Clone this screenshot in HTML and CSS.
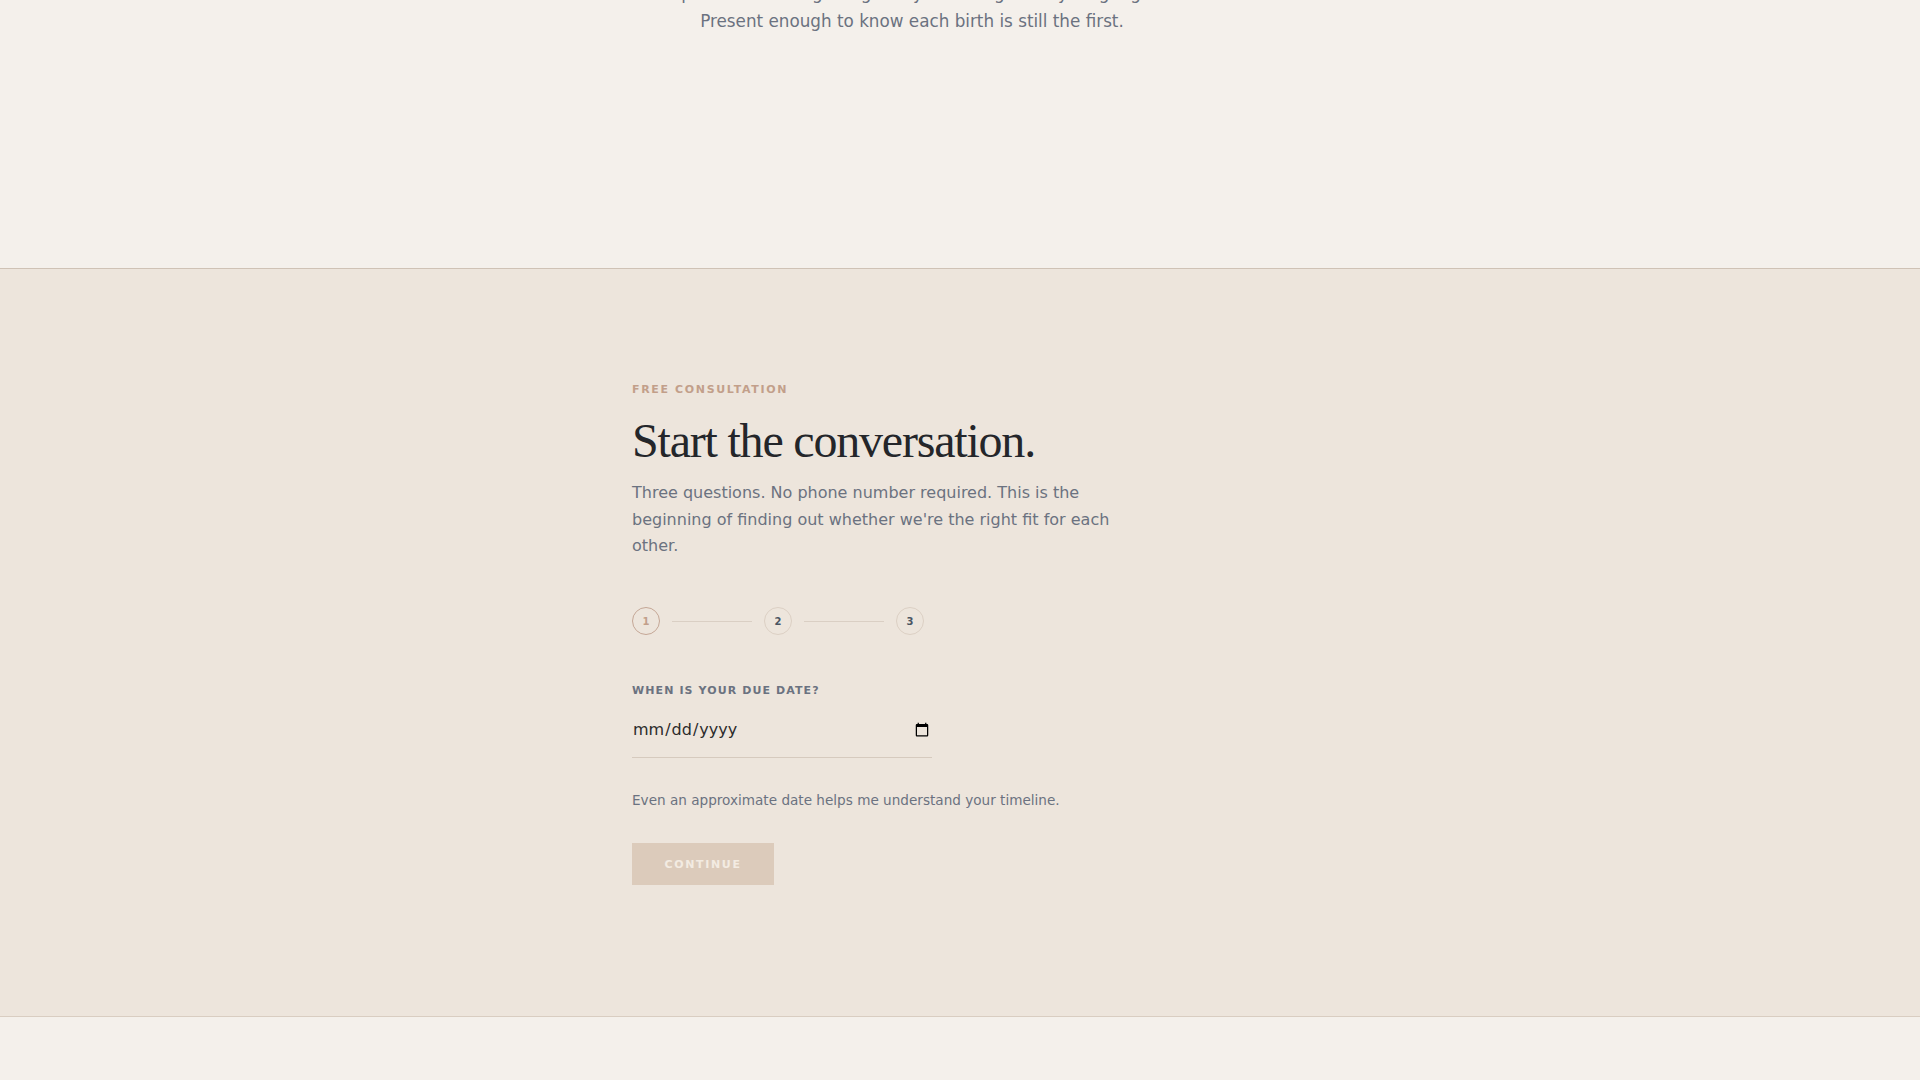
FILE: index.html
```html
<!DOCTYPE html>
<html lang="en">
<head>
<meta charset="utf-8">
<title>Start the conversation</title>
<link rel="stylesheet" href="styles.css">
</head>
<body>
<section class="intro">
  <div class="wrap">
    <p class="intro-text">Experienced enough to guide you through every long night.<br>Present enough to know each birth is still the first.</p>
  </div>
</section>
<section class="consult">
  <div class="wrap">
    <p class="eyebrow">Free consultation</p>
    <h2 class="title">Start the conversation.</h2>
    <p class="lead">Three questions. No phone number required. This is the beginning of finding out whether we're the right fit for each other.</p>
    <div class="steps">
      <span class="step step-active">1</span>
      <span class="step-line"></span>
      <span class="step">2</span>
      <span class="step-line"></span>
      <span class="step">3</span>
    </div>
    <form class="form">
      <label class="field-label" for="due">When is your due date?</label>
      <input class="date-input" id="due" type="date">
      <p class="hint">Even an approximate date helps me understand your timeline.</p>
      <button class="continue" type="button" disabled>Continue</button>
    </form>
  </div>
</section>
<section class="after"></section>
</body>
</html>
```
FILE: styles.css
```css
html, body {
  margin: 0;
  padding: 0;
  background: #f4f0eb;
  font-family: "DejaVu Sans", Verdana, sans-serif;
  overflow: hidden;
}

.wrap {
  max-width: 656px;
  margin: 0 auto;
}

.intro {
  padding-bottom: 233px;
}

.intro-text {
  margin: -21px 0 0;
  max-width: 560px;
  text-align: center;
  font-size: 16.8px;
  line-height: 28px;
  color: #6b7280;
}

.consult {
  background: #ede5dc;
  border-top: 1px solid #cfc2b5;
  border-bottom: 1px solid #d9cdc1;
  padding: 113px 0 131px;
}

.eyebrow {
  margin: 0 0 15px;
  font-size: 11px;
  line-height: 16px;
  font-weight: 700;
  letter-spacing: 0.15em;
  text-transform: uppercase;
  color: #c29f8a;
}

.title {
  margin: 0 0 12px;
  font-family: "Liberation Serif", "Times New Roman", serif;
  font-weight: 400;
  font-size: 48px;
  line-height: 1.15;
  letter-spacing: -0.025em;
  color: #24262a;
}

.lead {
  margin: 0 0 48px;
  max-width: 480px;
  font-size: 16px;
  line-height: 1.65;
  color: #6b7280;
}

.steps {
  display: flex;
  align-items: center;
  gap: 12px;
  margin-bottom: 48px;
}

.step {
  box-sizing: border-box;
  width: 28px;
  height: 28px;
  border-radius: 50%;
  border: 1px solid #dcd0c4;
  display: flex;
  align-items: center;
  justify-content: center;
  font-size: 10px;
  font-weight: 700;
  color: #4b5563;
}

.step-active {
  border-color: #c5a796;
  color: #c29f8a;
}

.step-line {
  width: 80px;
  height: 1px;
  background: #dacfc4;
}

.form {
  margin: 0;
}

.field-label {
  display: block;
  margin-bottom: 8px;
  font-size: 11px;
  line-height: 16px;
  font-weight: 700;
  letter-spacing: 0.1em;
  text-transform: uppercase;
  color: #6b7280;
}

.date-input {
  display: block;
  box-sizing: border-box;
  width: 300px;
  padding: 12px 0 17px;
  border: 0;
  border-bottom: 1px solid #d6cabe;
  background: transparent;
  font-family: "DejaVu Sans", sans-serif;
  font-size: 16px;
  color: #2b2b2b;
  outline: none;
  border-radius: 0;
}

.hint {
  margin: 33px 0 33px;
  font-size: 13.6px;
  line-height: 1.4;
  color: #6b7280;
}

.continue {
  display: block;
  height: 42px;
  padding: 0 32.5px;
  border: 0;
  border-radius: 0;
  background: #dccbbb;
  color: #f3ebe2;
  font-family: "DejaVu Sans", sans-serif;
  font-size: 11px;
  font-weight: 700;
  letter-spacing: 0.15em;
  text-transform: uppercase;
}

.after {
  height: 80px;
  background: #f4f0eb;
}
```
